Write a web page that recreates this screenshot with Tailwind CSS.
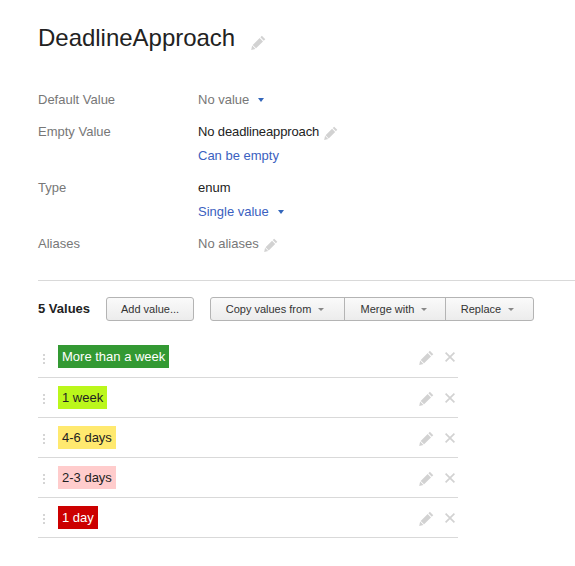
<!DOCTYPE html>
<html lang="en">
<head>
  <meta charset="UTF-8" />
  <title>DeadlineApproach</title>
  <script src="https://cdn.jsdelivr.net/npm/@tailwindcss/browser@4"></script>
</head>
<body class="bg-white font-['Liberation_Sans',Arial,sans-serif] text-[13px] text-[#222] overflow-hidden">
  <svg class="hidden">
    <symbol id="pencil" viewBox="0 0 16 16">
      <path fill="currentColor" d="M11.6.8 15.2 4.4 13.6 6 10 2.4zM9.2 3.2l3.6 3.6-7.4 7.4-3.6-3.6zM1.2 11.2l3.6 3.6L.2 16z"/>
    </symbol>
    <symbol id="cross" viewBox="0 0 10 10">
      <path fill="none" stroke="currentColor" stroke-width="1.7" d="M.6.6l8.8 8.8M9.4.6.6 9.4"/>
    </symbol>
  </svg>

  <main class="pl-[38px]">
    <!-- Title -->
    <div class="flex items-center pt-[18px] h-[58px]">
      <h1 class="text-[24px] leading-[32px] text-[#222] tracking-[-0.02px]">DeadlineApproach</h1>
      <svg class="w-[15px] h-[15px] ml-[16px] mt-[9px] text-[#d2d2d2]"><use href="#pencil" /></svg>
    </div>

    <!-- Properties -->
    <div class="grid grid-cols-[160px_1fr] gap-y-[8px] mt-[30px] leading-[24px]">
      <div class="text-[#777]">Default Value</div>
      <div class="flex items-center text-[#777]">No value<span class="ml-[9px] mt-[-1px] border-x-[3px] border-t-[4px] border-x-transparent border-t-[#3366bb]"></span></div>

      <div class="text-[#777]">Empty Value</div>
      <div>
        <div class="flex items-center tracking-[-0.13px]">No deadlineapproach<svg class="w-[14px] h-[14px] ml-[5px] mt-[2px] text-[#d2d2d2]"><use href="#pencil" /></svg></div>
        <div class="text-[#3b5fc0]">Can be empty</div>
      </div>

      <div class="text-[#777]">Type</div>
      <div>
        <div>enum</div>
        <div class="flex items-center text-[#3b5fc0]">Single value<span class="ml-[9px] mt-[-1px] border-x-[3px] border-t-[4px] border-x-transparent border-t-[#3366bb]"></span></div>
      </div>

      <div class="text-[#777]">Aliases</div>
      <div class="flex items-center text-[#777]">No aliases<svg class="w-[14px] h-[14px] ml-[5px] mt-[2px] text-[#d2d2d2]"><use href="#pencil" /></svg></div>
    </div>

    <hr class="mt-[24px] border-t border-[#d9d9d9]" />

    <!-- Toolbar -->
    <div class="flex items-center mt-[16px] h-[24px] text-[11px] text-[#333]">
      <div class="w-[68px] text-[13px] font-bold text-[#222]">5 Values</div>
      <button class="w-[88px] h-[24px] border border-[#b4b4b4] rounded-[3px] bg-linear-to-b from-[#fafafa] to-[#ececec]">Add value...</button>
      <div class="flex h-[24px] ml-[16px] border border-[#b4b4b4] rounded-[3px] bg-linear-to-b from-[#fafafa] to-[#ececec]">
        <button class="w-[134px] flex items-center justify-center gap-[7px] pr-[5px] border-r border-[#b4b4b4]">Copy values from<span class="border-x-[3px] border-t-[3px] border-x-transparent border-t-[#888]"></span></button>
        <button class="w-[101px] flex items-center justify-center gap-[7px] pr-[2px] border-r border-[#b4b4b4]">Merge with<span class="border-x-[3px] border-t-[3px] border-x-transparent border-t-[#888]"></span></button>
        <button class="w-[87px] flex items-center justify-center gap-[7px] pr-[4px]">Replace<span class="border-x-[3px] border-t-[3px] border-x-transparent border-t-[#888]"></span></button>
      </div>
    </div>

    <!-- Values -->
    <ul class="w-[420px] mt-[17px]">
      <li class="flex items-center h-[40px] border-b border-[#d9d9d9] pb-[2px]">
        <span class="w-[20px] pl-[5px] mt-[5px]"><span class="block w-[2px] h-[10px] bg-[repeating-linear-gradient(#d5d5d5_0,#d5d5d5_2px,transparent_2px,transparent_4px)]"></span></span>
        <span class="px-[4px] leading-[23px] bg-[#339933] text-white">More than a week</span>
        <svg class="w-[15px] h-[15px] ml-auto mr-[-1px] mt-[2px] text-[#d2d2d2]"><use href="#pencil" /></svg>
        <svg class="w-[10px] h-[10px] ml-[12px] mr-[3px] mt-[1px] text-[#d2d2d2]"><use href="#cross" /></svg>
      </li>
      <li class="flex items-center h-[40px] border-b border-[#d9d9d9]">
        <span class="w-[20px] pl-[5px] mt-[3px]"><span class="block w-[2px] h-[10px] bg-[repeating-linear-gradient(#d5d5d5_0,#d5d5d5_2px,transparent_2px,transparent_4px)]"></span></span>
        <span class="px-[4px] leading-[23px] bg-[#bbf71b] text-[#222]">1 week</span>
        <svg class="w-[15px] h-[15px] ml-auto mr-[-1px] mt-[2px] text-[#d2d2d2]"><use href="#pencil" /></svg>
        <svg class="w-[10px] h-[10px] ml-[12px] mr-[3px] mt-[1px] text-[#d2d2d2]"><use href="#cross" /></svg>
      </li>
      <li class="flex items-center h-[40px] border-b border-[#d9d9d9]">
        <span class="w-[20px] pl-[5px] mt-[3px]"><span class="block w-[2px] h-[10px] bg-[repeating-linear-gradient(#d5d5d5_0,#d5d5d5_2px,transparent_2px,transparent_4px)]"></span></span>
        <span class="px-[4px] leading-[23px] bg-[#ffe96f] text-[#222]">4-6 days</span>
        <svg class="w-[15px] h-[15px] ml-auto mr-[-1px] mt-[2px] text-[#d2d2d2]"><use href="#pencil" /></svg>
        <svg class="w-[10px] h-[10px] ml-[12px] mr-[3px] mt-[1px] text-[#d2d2d2]"><use href="#cross" /></svg>
      </li>
      <li class="flex items-center h-[40px] border-b border-[#d9d9d9]">
        <span class="w-[20px] pl-[5px] mt-[3px]"><span class="block w-[2px] h-[10px] bg-[repeating-linear-gradient(#d5d5d5_0,#d5d5d5_2px,transparent_2px,transparent_4px)]"></span></span>
        <span class="px-[4px] leading-[23px] bg-[#ffcccc] text-[#222]">2-3 days</span>
        <svg class="w-[15px] h-[15px] ml-auto mr-[-1px] mt-[2px] text-[#d2d2d2]"><use href="#pencil" /></svg>
        <svg class="w-[10px] h-[10px] ml-[12px] mr-[3px] mt-[1px] text-[#d2d2d2]"><use href="#cross" /></svg>
      </li>
      <li class="flex items-center h-[40px] border-b border-[#d9d9d9]">
        <span class="w-[20px] pl-[5px] mt-[3px]"><span class="block w-[2px] h-[10px] bg-[repeating-linear-gradient(#d5d5d5_0,#d5d5d5_2px,transparent_2px,transparent_4px)]"></span></span>
        <span class="px-[4px] leading-[23px] bg-[#cc0000] text-white">1 day</span>
        <svg class="w-[15px] h-[15px] ml-auto mr-[-1px] mt-[2px] text-[#d2d2d2]"><use href="#pencil" /></svg>
        <svg class="w-[10px] h-[10px] ml-[12px] mr-[3px] mt-[1px] text-[#d2d2d2]"><use href="#cross" /></svg>
      </li>
    </ul>
  </main>
</body>
</html>
